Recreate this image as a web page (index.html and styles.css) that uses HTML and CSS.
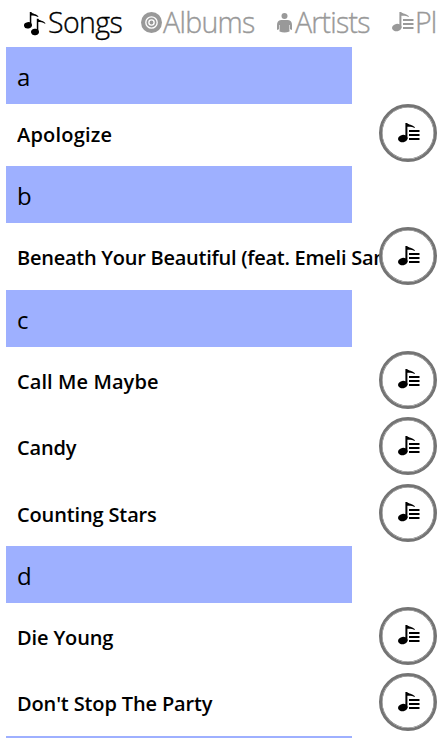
FILE: index.html
```html
<!DOCTYPE html>
<html lang="en">
<head>
<meta charset="utf-8">
<title>Songs</title>
<link rel="stylesheet" href="styles.css">
</head>
<body>
<svg class="defs" aria-hidden="true">
  <symbol id="list" viewBox="0 0 22 20">
    <ellipse cx="4.800" cy="15.600" rx="4.800" ry="3.700" transform="rotate(-12 4.800 15.600)"/>
    <path d="M7.400 0H9.200C10.400 2 14.500 1.500 17 4.300L16.300 5C13.500 3.300 11 4 9.400 3.800V16H7.400z"/>
    <path d="M11 7H21.500V8.900H11zM11 11H21.500V12.900H11zM11 15H21.500V16.900H11z"/>
  </symbol>
</svg>
<nav class="tabs">
  <a class="tab songs active"><svg class="icon" viewBox="0 0 22 24"><ellipse cx="4" cy="13.300" rx="4" ry="3.200" transform="rotate(-12 4 13.300)"/><path d="M5.800 0H7.300C8.500 2.200 12 1.500 14.500 4.500L14 5C11.500 3.200 9.500 3.800 7.300 3.400V13.300H5.800z"/><ellipse cx="11" cy="20" rx="4" ry="3.200" transform="rotate(-12 11 20)"/><path d="M12.800 6.700H14.300C15.500 8.900 19 8.200 21.500 11.200L21 11.700C18.500 9.900 16.500 10.500 14.300 10.100V20H12.800z"/></svg><span>Songs</span></a>
  <a class="tab albums"><svg class="icon" viewBox="0 0 20 20"><circle cx="10" cy="10" r="10"/><g class="rings"><circle cx="10" cy="10" r="5.400"/><circle cx="10" cy="10" r="2.500"/></g></svg><span>Albums</span></a>
  <a class="tab artists"><svg class="icon" viewBox="0 0 15 20"><circle cx="7.500" cy="3" r="3"/><path d="M4 7H11Q15 7.500 15 12V17L12.500 16V18.500Q7.500 20.500 2.500 18.500V16L0 17V12Q0 7.500 4 7z"/><path class="arms" d="M2.500 12V16.500M12.500 12V16.500"/></svg><span>Artists</span></a>
  <a class="tab playlists"><svg class="icon"><use href="#list"/></svg><span>Pl</span></a>
</nav>
<main>
  <section>
    <h2>a</h2>
    <div class="song first"><span class="looser">Apologize</span><button><svg><use href="#list"/></svg></button></div>
  </section>
  <section>
    <h2>b</h2>
    <div class="song"><span class="tighter">Beneath Your Beautiful (feat. Emeli San</span><button><svg><use href="#list"/></svg></button></div>
  </section>
  <section>
    <h2>c</h2>
    <div class="song"><span class="loose">Call Me Maybe</span><button><svg><use href="#list"/></svg></button></div>
    <div class="song"><span class="tight">Candy</span><button><svg><use href="#list"/></svg></button></div>
    <div class="song"><span class="tight">Counting Stars</span><button><svg><use href="#list"/></svg></button></div>
  </section>
  <section>
    <h2>d</h2>
    <div class="song"><span class="tight">Die Young</span><button><svg><use href="#list"/></svg></button></div>
    <div class="song"><span class="tight">Don't Stop The Party</span><button><svg><use href="#list"/></svg></button></div>
  </section>
  <section class="next"></section>
</main>
</body>
</html>
```

FILE: styles.css
```css
* { box-sizing: border-box; }
body {
  margin: 0;
  width: 443px;
  height: 738px;
  overflow: hidden;
  background: #fff;
  color: #000;
  font-family: "Open Sans", "Noto Sans", sans-serif;
}
.defs { display: none; }
.tabs {
  height: 47px;
  padding-left: 24px;
  display: flex;
  overflow: hidden;
  color: #999;
  fill: #999;
}
.tab {
  display: flex;
  flex: none;
  font-size: 28.5px;
  font-weight: 300;
  -webkit-text-stroke: 0.35px;
  line-height: 44px;
  white-space: nowrap;
}
.active { color: #000; fill: #000; }
.icon { flex: none; }
.songs { width: 117px; letter-spacing: -0.6px; }
.songs .icon { width: 22px; height: 24px; margin: 12px 2px 0 0; }
.albums { width: 136px; letter-spacing: -0.7px; }
.albums .icon { width: 21px; height: 21px; margin: 12px 1px 0 0; }
.rings { fill: none; stroke: #fff; stroke-width: 1.3; }
.artists { width: 115px; letter-spacing: -0.8px; }
.artists .icon { width: 15px; height: 20px; margin: 13px 3px 0 0; }
.arms { stroke: #fff; stroke-width: 0.6; }
.playlists { letter-spacing: -0.8px; }
.playlists .icon { width: 22px; height: 20px; margin: 12px 1px 0 0; }
h2 {
  margin: 0 0 0 6px;
  padding: 5px 0 0 11px;
  width: 346px;
  height: 57px;
  background: #9eb0ff;
  font-size: 24px;
  font-weight: 400;
  line-height: 50px;
}
.song {
  height: 66.4px;
  padding: 4px 6px 0 17px;
  display: flex;
  align-items: flex-start;
}
.song.first { height: 62.4px; padding-top: 0; }
.song span {
  width: 363px;
  flex: none;
  overflow: hidden;
  white-space: nowrap;
  font-size: 20px;
  font-weight: 600;
  line-height: 62px;
  height: 62px;
}
.song .looser { letter-spacing: 0.2px; }
.song .loose { letter-spacing: 0.08px; }
.song .tight { letter-spacing: -0.14px; }
.song .tighter { letter-spacing: -0.26px; }
.song button {
  width: 58px;
  height: 58px;
  margin: 0 0 0 -1px;
  padding: 0 0 1px 2px;
  flex: none;
  display: flex;
  align-items: center;
  justify-content: center;
  border: 3px solid #747474;
  border-radius: 50%;
  background: #fff;
  box-shadow: inset 0 0 0 0.5px #747474;
}
.song button svg { width: 22px; height: 20px; fill: #000; }
.next { height: 2px; margin-left: 6px; width: 346px; background: #9eb0ff; }
```
